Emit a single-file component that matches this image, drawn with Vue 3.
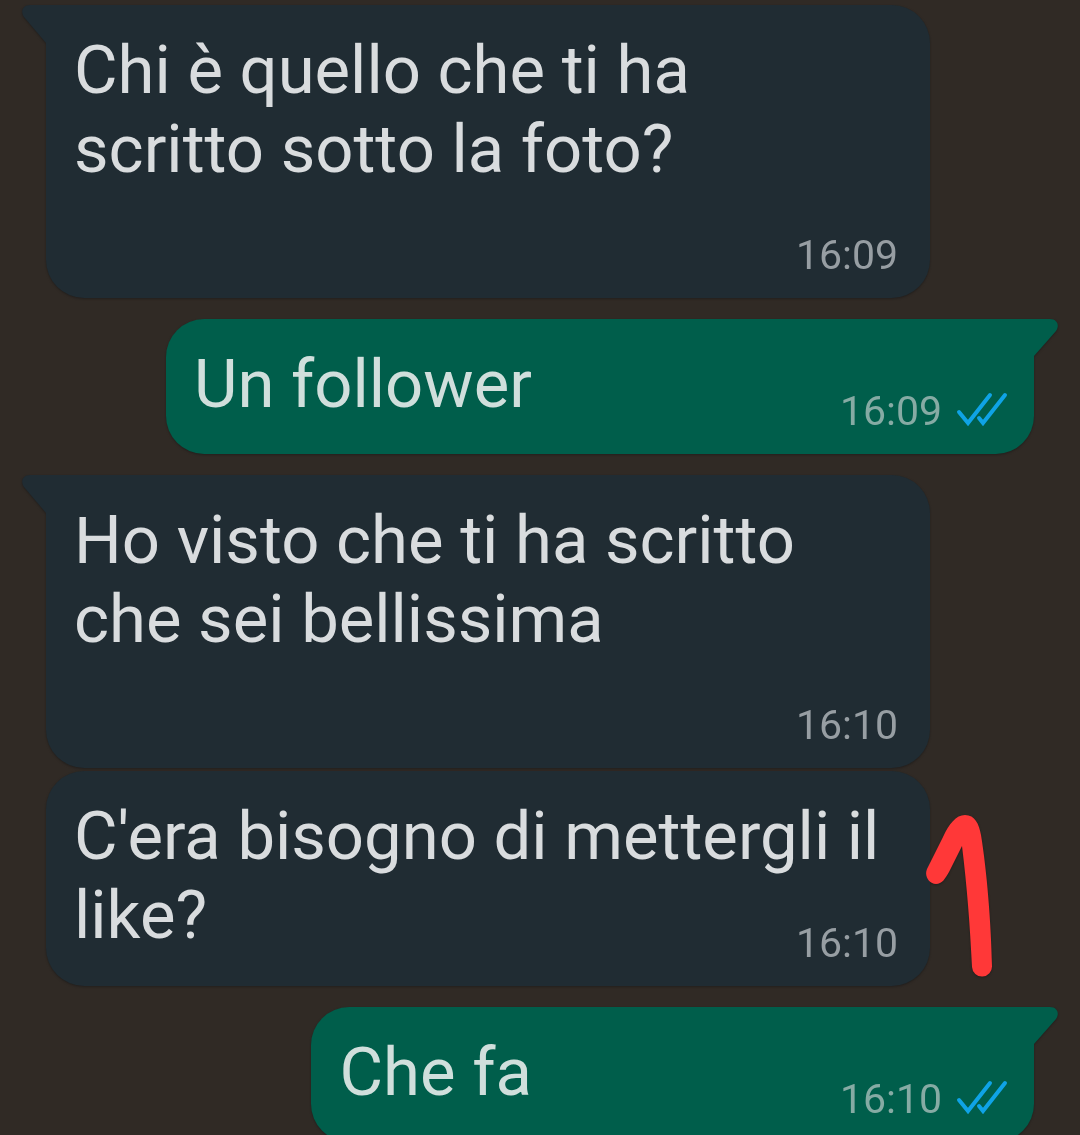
<script setup>
const messages = [
  { text: 'Chi è quello che ti ha scritto sotto la foto?', time: '16:09', side: 'in', tail: true },
  { text: 'Un follower', time: '16:09', side: 'out', tail: true },
  { text: 'Ho visto che ti ha scritto che sei bellissima', time: '16:10', side: 'in', tail: true },
  { text: "C'era bisogno di mettergli il like?", time: '16:10', side: 'in', mark: true },
  { text: 'Che fa', time: '16:10', side: 'out', tail: true },
]
</script>

<template>
  <main class="chat">
    <article
      v-for="(m, i) in messages"
      :key="i"
      class="bubble"
      :class="[m.side, { follow: !m.tail }]"
    >
      <svg v-if="m.tail && m.side === 'in'" class="corner left" width="66" height="42" viewBox="0 0 66 42" aria-hidden="true">
        <path d="M66 0H9C2 0-1 6 3 12L25 38V42H66Z" fill="#202c33" />
      </svg>
      <svg v-if="m.tail && m.side === 'out'" class="corner right" width="66" height="42" viewBox="0 0 66 42" aria-hidden="true">
        <path d="M0 0H58C65 0 68 6 64 12L42 37V42H0Z" fill="#005e4b" />
      </svg>
      <p class="text">{{ m.text }}</p>
      <footer class="meta">
        <time>{{ m.time }}</time>
        <svg v-if="m.side === 'out'" class="ticks" width="52" height="36" viewBox="0 0 52 36" aria-hidden="true">
          <path d="M3 19L12 30L34 2M23 25L27 30L49 2" fill="none" stroke="#0fa3e6" stroke-width="4" stroke-linecap="round" />
        </svg>
      </footer>
      <svg v-if="m.mark" class="mark" width="70" height="166" viewBox="0 0 70 166" role="img" aria-label="1">
        <path d="M1 57L17 25C23 12 30 3 39 3C49 3 53 12 55 23C61 60 65 110 66 154A10 10 0 0 1 46 155C44 113 41 75 36 34L23 60C19 67 16 72 10 72C3 72-2 64 1 57Z" fill="#ff3838" />
      </svg>
    </article>
  </main>
</template>

<style>
body {
  margin: 0;
  background: #302a25;
}
</style>

<style scoped>
.chat {
  display: flex;
  flex-direction: column;
  box-sizing: border-box;
  height: 100vh;
  overflow: hidden;
  padding: 5px 46px 0;
  background: #302a25;
  font-family: Roboto, sans-serif;
}
.bubble {
  position: relative;
  flex: none;
  display: flex;
  margin-top: 21px;
  padding: 26px 28px 19px;
  border-radius: 38px;
  filter: drop-shadow(0 1px 1px #211e1c);
}
.bubble:first-child {
  margin-top: 0;
}
.in {
  flex-direction: column;
  margin-right: 104px;
  background: #202c33;
}
.out {
  align-self: flex-end;
  gap: 308px;
  padding-right: 26px;
  background: #005e4b;
}
.text {
  margin: 0;
  color: #d9dcde;
  font-size: 67px;
  line-height: 79px;
}
.in .text {
  margin-right: 16px;
}
.out .text {
  margin-bottom: 11px;
  color: #d0dfdc;
}
.meta {
  display: flex;
  align-self: flex-end;
  align-items: center;
  gap: 14px;
  color: #979ea3;
  font-size: 41px;
  line-height: 48px;
}
.in .meta {
  margin-top: 42px;
  margin-right: 4px;
}
.out .meta {
  color: #86aba4;
}
.in.follow {
  margin-top: 3px;
}
.follow .meta {
  margin-top: -36px;
}
.corner {
  position: absolute;
  top: 0;
}
.left {
  left: -25px;
}
.right {
  right: -24px;
}
.ticks {
  overflow: visible;
}
.mark {
  position: absolute;
  right: -66px;
  top: 41px;
}
</style>
